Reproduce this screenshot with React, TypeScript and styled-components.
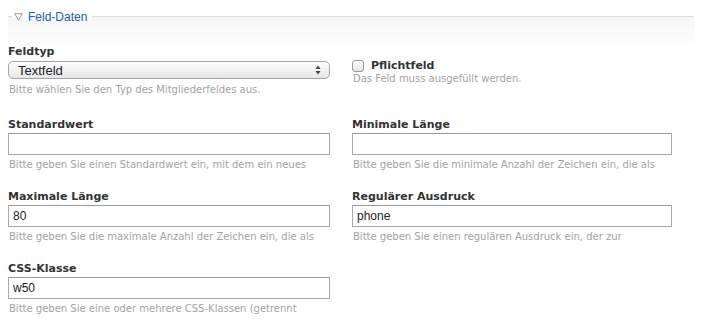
import styled, { createGlobalStyle } from 'styled-components'

const GlobalStyle = createGlobalStyle`
  html, body {
    margin: 0;
    padding: 0;
    background: #fff;
  }
  body {
    font-family: "DejaVu Sans", Verdana, sans-serif;
    color: #333;
  }
`

const Fieldset = styled.fieldset`
  margin: 10px 15px 0 8px;
  padding: 22px 0 0 0;
  border: none;
  border-top: 1px solid #ddd;
  min-width: 0;
  background: linear-gradient(to bottom, #f6f6f6 0, #fdfdfd 27px, #fff 28px);
`

const Legend = styled.legend`
  margin-left: 4px;
  padding: 0 5px 0 2px;
  display: flex;
  align-items: center;
  gap: 5px;
  height: 13px;
  font-family: "Liberation Sans", Arial, sans-serif;
  font-size: 12px;
  color: #1a5eb5;
`

const Toggle = styled.svg`
  display: block;
  width: 9px;
  height: 8px;
`

const Grid = styled.div`
  display: grid;
  grid-template-columns: 322px 320px;
  grid-template-rows: 73px 72px 72px 72px;
  column-gap: 22px;
`

const Field = styled.div`
  display: flex;
  flex-direction: column;
  min-width: 0;
`

const Label = styled.label`
  display: block;
  font-size: 11px;
  line-height: 13px;
  font-weight: bold;
  color: #333;
  margin-bottom: 2px;
`

const Help = styled.p`
  margin: 3px 0 0 0;
  font-size: 10px;
  line-height: 13px;
  white-space: nowrap;
  color: #a3a3a3;
  padding-left: 1px;
`

const TextInput = styled.input`
  box-sizing: border-box;
  width: 100%;
  height: 22px;
  margin: 0;
  padding: 0 4px;
  border: 1px solid #aaa;
  border-top-color: #999;
  background: #fff;
  font-family: "Liberation Sans", Arial, sans-serif;
  font-size: 12px;
  color: #222;
  outline: none;
`

const Select = styled.div`
  box-sizing: border-box;
  height: 18px;
  margin-top: 1px;
  margin-bottom: 1px;
  display: flex;
  align-items: center;
  justify-content: space-between;
  padding: 0 8px 0 9px;
  border: 1px solid #a4a4a4;
  border-radius: 5px;
  background: linear-gradient(to bottom, #fefefe 0%, #f2f2f2 50%, #e6e6e6 100%);
  box-shadow: inset 0 1px 0 #fff;
  font-family: "Liberation Sans", Arial, sans-serif;
  font-size: 13px;
  color: #222;
`

const Arrows = styled.svg`
  display: block;
  width: 6px;
  height: 10px;
`

const CheckRow = styled.div`
  display: flex;
  align-items: center;
  gap: 7px;
  margin-top: 14px;
`

const Checkbox = styled.span`
  box-sizing: border-box;
  width: 12px;
  height: 12px;
  border: 1px solid #9a9a9a;
  border-radius: 3px;
  background: linear-gradient(to bottom, #fff, #e4e4e4);
`

const CheckLabel = styled.span`
  font-size: 11px;
  font-weight: bold;
  line-height: 13px;
  color: #333;
`

const CheckHelp = styled(Help)`
  margin-top: 0;
`

interface TextFieldProps {
  label: string
  value?: string
  help: string
}

const TextField = ({ label, value = '', help }: TextFieldProps) => (
  <Field>
    <Label>{label}</Label>
    <TextInput defaultValue={value} />
    <Help>{help}</Help>
  </Field>
)

export default function App() {
  return (
    <>
      <GlobalStyle />
      <Fieldset>
        <Legend>
          <Toggle viewBox="0 0 9 8">
            <path d="M0.7 0.7 H8.3 L4.5 7.3 Z" fill="none" stroke="#9a9a9a" strokeWidth="1" />
          </Toggle>
          Feld-Daten
        </Legend>
        <Grid>
          <Field>
            <Label>Feldtyp</Label>
            <Select>
              <span>Textfeld</span>
              <Arrows viewBox="0 0 6 10">
                <path d="M3 0.5 L5.5 4 H0.5 Z" fill="#444" />
                <path d="M3 9.5 L5.5 6 H0.5 Z" fill="#444" />
              </Arrows>
            </Select>
            <Help>Bitte wählen Sie den Typ des Mitgliederfeldes aus.</Help>
          </Field>
          <Field>
            <CheckRow>
              <Checkbox />
              <CheckLabel>Pflichtfeld</CheckLabel>
            </CheckRow>
            <CheckHelp>Das Feld muss ausgefüllt werden.</CheckHelp>
          </Field>
          <TextField
            label="Standardwert"
            help="Bitte geben Sie einen Standardwert ein, mit dem ein neues"
          />
          <TextField
            label="Minimale Länge"
            help="Bitte geben Sie die minimale Anzahl der Zeichen ein, die als"
          />
          <TextField
            label="Maximale Länge"
            value="80"
            help="Bitte geben Sie die maximale Anzahl der Zeichen ein, die als"
          />
          <TextField
            label="Regulärer Ausdruck"
            value="phone"
            help="Bitte geben Sie einen regulären Ausdruck ein, der zur"
          />
          <TextField
            label="CSS-Klasse"
            value="w50"
            help="Bitte geben Sie eine oder mehrere CSS-Klassen (getrennt"
          />
        </Grid>
      </Fieldset>
    </>
  )
}
